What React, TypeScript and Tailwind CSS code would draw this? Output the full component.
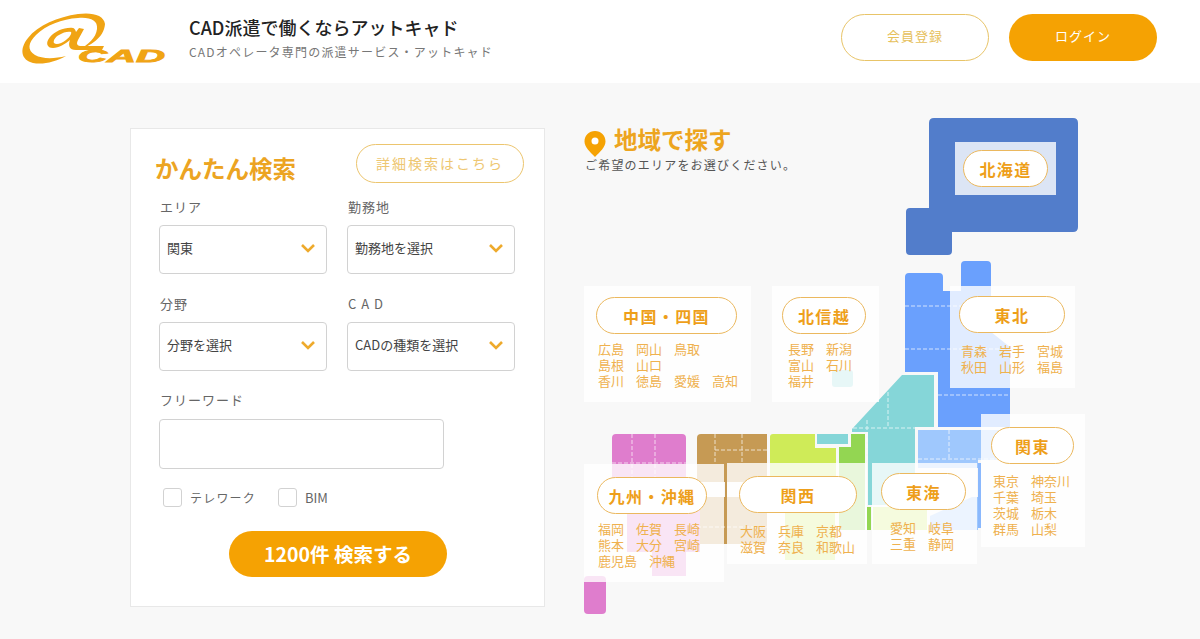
import React from 'react';

const regions = [
  {
    name: '北海道',
    box: 'left-[375px] top-[32px] w-[101px] h-[53px] pt-[8px] pl-[8px]',
    pill: 'w-[85px]',
    list: 'hidden',
    rows: [] as string[][],
  },
  {
    name: '中国・四国',
    box: 'left-[4px] top-[176px] w-[167px] h-[116px] pt-[11px] pl-[12px]',
    pill: 'w-[141px]',
    list: 'mt-[7px] ml-[2px]',
    rows: [['広島', '岡山', '鳥取'], ['島根', '山口'], ['香川', '徳島', '愛媛', '高知']],
  },
  {
    name: '北信越',
    box: 'left-[192px] top-[176px] w-[107px] h-[116px] pt-[11px] pl-[10px]',
    pill: 'w-[84px]',
    list: 'mt-[7px] ml-[6px]',
    rows: [['長野', '新潟'], ['富山', '石川'], ['福井']],
  },
  {
    name: '東北',
    box: 'left-[370px] top-[176px] w-[125px] h-[102px] pt-[10px] pl-[9px]',
    pill: 'w-[106px]',
    list: 'mt-[10px] ml-[2px]',
    rows: [['青森', '岩手', '宮城'], ['秋田', '山形', '福島']],
  },
  {
    name: '関東',
    box: 'left-[401px] top-[304px] w-[104px] h-[133px] pt-[13px] pl-[10px]',
    pill: 'w-[83px]',
    list: 'mt-[9px] ml-[2px]',
    rows: [['東京', '神奈川'], ['千葉', '埼玉'], ['茨城', '栃木'], ['群馬', '山梨']],
  },
  {
    name: '東海',
    box: 'left-[292px] top-[353px] w-[105px] h-[101px] pt-[10px] pl-[9px]',
    pill: 'w-[85px]',
    list: 'mt-[10px] ml-[9px]',
    rows: [['愛知', '岐阜'], ['三重', '静岡']],
  },
  {
    name: '関西',
    box: 'left-[147px] top-[353px] w-[140px] h-[101px] pt-[13px] pl-[12px]',
    pill: 'w-[118px]',
    list: 'mt-[10px] ml-[1px]',
    rows: [['大阪', '兵庫', '京都'], ['滋賀', '奈良', '和歌山']],
  },
  {
    name: '九州・沖縄',
    box: 'left-[4px] top-[354px] w-[140px] h-[118px] pt-[13px] pl-[13px]',
    pill: 'w-[110px]',
    list: 'mt-[7px] ml-[1px]',
    rows: [['福岡', '佐賀', '長崎'], ['熊本', '大分', '宮崎'], ['鹿児島', '沖縄']],
  },
];

const Logo = () => (
  <svg width="170" height="75" viewBox="0 0 170 75" className="shrink-0">
    <path
      fill="#f0a414"
      d="M105 24C104 15 92 12 78 14C58 17 38 25 28 38C19 49 21 60 33 63C43 65 55 62 66 56C54 59 42 59 35 55C27 50 28 43 36 35C46 25 62 19 78 18C90 17 98 20 97 29C96 38 88 45 78 50C90 46 104 38 105 24Z"
    />
    <path
      fill="#f0a414"
      d="M73 28C65 27 55 31 50 37C45 43 47 48 53 48C59 48 65 44 70 40C68 45 69 50 76 50L102 50L104 46L82 46C77 46 76 44 78 40L84 29L79 28L76 32C75 29 74 28 73 28ZM71 32C72 33 70 37 66 40C61 44 56 45 54 43C53 41 55 37 59 35C63 32 69 31 71 32Z"
    />
    <text
      x="78"
      y="62"
      fill="#f0a414"
      fontFamily="'Liberation Sans', sans-serif"
      fontSize="17"
      fontWeight="700"
      fontStyle="italic"
      textLength="87"
      lengthAdjust="spacingAndGlyphs"
      stroke="#f0a414"
      strokeWidth="0.8"
    >
      CAD
    </text>
  </svg>
);

const Chevron = () => (
  <svg width="16" height="10" viewBox="0 0 16 10" fill="none" className="shrink-0">
    <path d="M2 2l6 6 6-6" stroke="#eeaa2c" strokeWidth="2.6" />
  </svg>
);

const SelectBox = ({ value, className }: { value: string; className: string }) => (
  <div className={`flex h-[49px] items-center justify-between rounded border-[1.5px] border-[#d2d2d2] bg-white pb-[3px] pl-[7px] pr-[10px] text-[13px] text-[#444] ${className}`}>
    <span>{value}</span>
    <Chevron />
  </div>
);

const Field = ({ label, value }: { label: string; value: string }) => (
  <div className="w-[188px]">
    <div className="h-[18px] pl-px text-[13px] leading-[18px] tracking-[1px] text-[#666]">{label}</div>
    <SelectBox value={value} className="mt-[9px] w-[168px]" />
  </div>
);

const Check = ({ label, textClass }: { label: string; textClass: string }) => (
  <label className={`flex items-center gap-2 text-[#666] ${textClass}`}>
    <span className="h-[19px] w-[19px] rounded-[3px] border-[1.5px] border-[#d2d2d2] bg-white" />
    {label}
  </label>
);

const SearchCard = () => (
  <div className="mt-[18px] h-[479px] w-[415px] shrink-0 border border-[#e8e8e8] bg-white">
    <div className="flex h-[55px] items-start pl-[24px] pt-[15px]">
      <h2 className="mt-[5px] text-[23.5px] font-bold leading-[38px] text-[#eca422]">かんたん検索</h2>
      <button className="ml-[60px] h-[39px] w-[168px] rounded-full border-[1.5px] border-[#ecc56e] text-[14px] tracking-[2px] text-[#eec772]">
        詳細検索はこちら
      </button>
    </div>
    <div className="ml-[28px] mt-[14px] flex">
      <Field label="エリア" value="関東" />
      <Field label="勤務地" value="勤務地を選択" />
    </div>
    <div className="ml-[28px] mt-[21px] flex">
      <Field label="分野" value="分野を選択" />
      <Field label="C A D" value="CADの種類を選択" />
    </div>
    <div className="ml-[28px] mt-[20px] h-[18px] pl-px text-[13px] leading-[18px] tracking-[1px] text-[#666]">フリーワード</div>
    <div className="ml-[28px] mt-[10px] h-[50px] w-[285px] rounded border-[1.5px] border-[#d2d2d2] bg-white" />
    <div className="ml-[32px] mt-[19px] flex gap-[22px]">
      <Check label="テレワーク" textClass="text-[12px] tracking-[1.2px]" />
      <Check label="BIM" textClass="text-[13px]" />
    </div>
    <button className="ml-[98px] mt-[23px] h-[46px] w-[218px] rounded-full bg-[#f5a203] text-[19.5px] font-bold text-white">
      1200件 検索する
    </button>
  </div>
);

// viewBox matches the page coordinates of the map area
const JapanMap = () => (
  <svg width="510" height="510" viewBox="580 110 510 510" className="absolute left-0 top-0">
    <g fill="#527dcb">
      <path d="M929 123q0-5 5-5h139q5 0 5 5v104q0 5-5 5H952v19q0 4-4 4h-38q-4 0-4-4v-39q0-4 4-4h19Z" />
    </g>
    <path fill="#6aa0fd" d="M905 277q0-4 4-4h30q4 0 4 4v14h18V265q0-4 4-4h22q4 0 4 4v67l19 15v80h-72V372h-33Z" />
    <path fill="#9fc8fd" d="M918 430h92v30h-92zM930 530v-14l42-19 6 0v33Z" />
    <path fill="#9fc8fd" d="M918 460h60v8h-60z" />
    <path fill="#8ab8fd" d="M978 463h3v65h-3z" />
    <path fill="#85d6d8" d="M852 429l50-54h32v52h-19v36h-45v42h-2V432h-16Z" />
    <path fill="#85d6d8" d="M870 463h45v42h-45z" />
    <rect x="817" y="434" width="31" height="10" fill="#85d6d8" />
    <path fill="#cfeb58" d="M773 434h42v14h21v15h-66v-26q0-3 3-3Z" />
    <path fill="#cfeb58" d="M770 463h66v33h-66zM785 513h50v47h-50zM873 507h54v23h-54z" />
    <path fill="#93d652" d="M851 434h14v96h-26V447h12Z" />
    <path fill="#93d652" d="M867 507h4v23h-4z" />
    <path fill="#c69a54" d="M701 434h66v29h-70v-25q0-4 4-4Z" />
    <path fill="#c69a54" d="M697 463h70v19h-70zM697 497h70v43q0 4-4 4h-66z" />
    <rect x="725" y="463" width="2" height="81" fill="#c69a54" />
    <path fill="#df7dcd" d="M616 434h66q4 0 4 4v138h-34v-24h-25v-52h-15v-62q0-4 4-4Z" />
    <path fill="#df7dcd" d="M686 500h14v52h-14z" />
    <rect x="584" y="576" width="22" height="38" rx="4" fill="#df7dcd" />
    <rect x="832" y="370" width="21" height="17" rx="3" fill="#85d6d8" />
    <g stroke="#ffffff" strokeWidth="1" strokeDasharray="4 2" fill="none" opacity="0.7">
      <path d="M905 306h85M905 349h105M938 395h72" />
      <path d="M888 392v36M867 420v40M853 428h62M918 459h92M949 430v30" />
      <path d="M632 434v66M655 434v66M612 463h74" />
      <path d="M715 434v30M742 434v30M715 450h52M697 527h70" />
    </g>
  </svg>
);

const RegionPanel = ({ region }: { region: (typeof regions)[number] }) => (
  <div className={`absolute bg-white/80 ${region.box}`}>
    <div className={`flex h-[37px] items-center justify-center rounded-full border-[1.5px] border-[#ebb85e] bg-white text-[16px] font-bold tracking-[1.4px] text-[#ee9f1a] ${region.pill}`}>
      {region.name}
    </div>
    <div className={region.list}>
      {region.rows.map((row, i) => (
        <div key={i} className="flex h-[16px] gap-3 text-[13px] leading-[16px] text-[#efb14e]">
          {row.map((p) => (
            <span key={p}>{p}</span>
          ))}
        </div>
      ))}
    </div>
  </div>
);

const AreaMap = () => (
  <div className="relative ml-[35px] h-[510px] w-[510px] shrink-0">
    <JapanMap />
    <div className="relative pl-[4px] pt-[10px]">
      <div className="flex items-center gap-[8px]">
        <svg width="22" height="27" viewBox="0 0 22 27" className="mt-[10px] shrink-0">
          <path fill="#f5a203" d="M11 1C5 1 .5 5.500.5 11.500.5 17 6 22 11 27c5-5 10.500-10 10.500-15.500C21.500 5.500 17 1 11 1Z" />
          <circle cx="11" cy="11" r="3.500" fill="#fff" />
        </svg>
        <h2 className="text-[23.5px] font-bold leading-[28px] text-[#eda51f]">地域で探す</h2>
      </div>
      <p className="mt-[-1px] pl-px text-[12px] leading-[18px] tracking-[1.2px] text-[#555]">ご希望のエリアをお選びください。</p>
    </div>
    {regions.map((r) => (
      <RegionPanel key={r.name} region={r} />
    ))}
  </div>
);

export default function App() {
  return (
    <div className="h-[639px] w-[1200px] overflow-hidden bg-[#f8f8f8] font-['Noto_Sans_CJK_JP','Noto_Sans',sans-serif]">
      <header className="flex h-[83px] items-center bg-white pb-[8px]">
        <Logo />
        <div className="ml-[19px] mt-[-1px]">
          <div className="text-[18px] font-medium leading-[26px] text-[#222]">CAD派遣で働くならアットキャド</div>
          <div className="mt-[3px] text-[12px] leading-[18px] tracking-[1.2px] text-[#777]">CADオペレータ専門の派遣サービス・アットキャド</div>
        </div>
        <div className="ml-auto mr-[43px] flex gap-[20px]">
          <button className="h-[47px] w-[148px] rounded-full border-[1.5px] border-[#e8c468] pb-[3px] text-[13px] tracking-[1px] text-[#e6c05a]">会員登録</button>
          <button className="h-[47px] w-[148px] rounded-full bg-[#f5a203] pb-[3px] text-[13px] tracking-[1px] text-white">ログイン</button>
        </div>
      </header>
      <main className="flex pl-[130px] pt-[27px]">
        <SearchCard />
        <AreaMap />
      </main>
    </div>
  );
}
